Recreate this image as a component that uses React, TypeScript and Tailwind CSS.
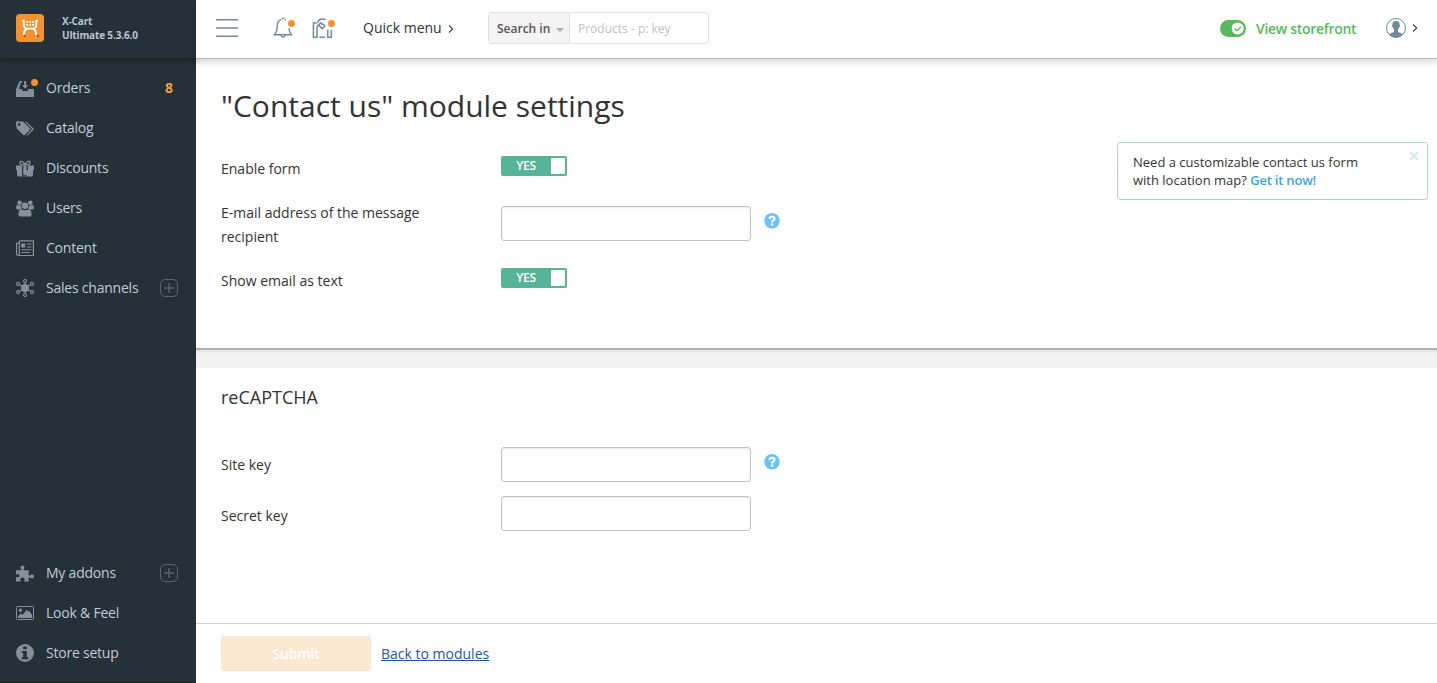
import type { ReactNode } from 'react';

function OrdersIcon() {
  return (
    <svg width="18" height="17" viewBox="0 0 18 17" fill="currentColor">
      <path d="M3.6 1H6.2V2.5H4.8L3 9H6.2V11H11.8V9H18V17H0V9.6Z" />
      <path d="M8.1 1H10.1V5.2H12.2L9.1 8.8L6 5.2H8.1Z" />
    </svg>
  );
}

function CatalogIcon() {
  return (
    <svg width="18" height="15" viewBox="0 0 18 15" fill="currentColor">
      <path fillRule="evenodd" d="M0 1.2Q0 .3 1 .3L6.4 .6Q7.4 .8 8 1.4L14 7.2Q14.7 8 14 8.7L8.8 13.9Q8 14.6 7.2 13.9L1.2 8Q.6 7.3 .4 6.3ZM3.2 2.1A1.3 1.3 0 1 0 3.2 4.7A1.3 1.3 0 1 0 3.2 2.1Z" />
      <path d="M8.5 .6L9.8 .8Q10.6 .9 11.2 1.5L17.4 7.3Q18 8 17.4 8.7L12 14.1Q11.3 14.7 10.5 14.1L15.4 9Q16.2 8 15.3 7.1Z" />
    </svg>
  );
}

function GiftIcon() {
  return (
    <svg width="18" height="17" viewBox="0 0 18 17" fill="currentColor">
      <path d="M0 5.5H6.1V9.9H0ZM11.9 5.5H18V9.9H11.9ZM7.3 6H10.7V15.3H7.3ZM1 9.9H6.2V16.2H10.8V9.9H17V15Q17 16.6 15.4 16.6H2.6Q1 16.6 1 15Z" />
      <path d="M8.5 5C6 5 3.9 4.5 3.9 2.7C3.9 .5 7 .7 9 4.6C11 .7 14.1 .5 14.1 2.7C14.1 4.5 12 5 9.5 5" fill="none" stroke="currentColor" strokeWidth="1.4" />
    </svg>
  );
}

function UsersIcon() {
  return (
    <svg width="18" height="17" viewBox="0 0 18 17" fill="currentColor">
      <circle cx="3.6" cy="2.8" r="2.3" />
      <circle cx="14.4" cy="2.8" r="2.3" />
      <circle cx="9" cy="5.8" r="3.3" />
      <path d="M1.8 4.8Q3.5 6 4.9 5.2Q5 7.4 6 8.5Q4.4 8.7 3.4 9.7H2Q0 9.5 0 7.5Q0 5.3 1.8 4.8ZM16.2 4.8Q14.5 6 13.1 5.2Q13 7.4 12 8.5Q13.6 8.7 14.6 9.7H16Q18 9.5 18 7.5Q18 5.3 16.2 4.8Z" />
      <path d="M5.6 9.2Q9 11.2 12.4 9.2Q15.6 9.7 15.6 14Q15.6 16.6 13 16.6H5Q2.4 16.6 2.4 14Q2.4 9.7 5.6 9.2Z" />
    </svg>
  );
}

function ContentIcon() {
  return (
    <svg width="18" height="17" viewBox="0 0 18 17" fill="none" stroke="currentColor">
      <path d="M3.5 .9H17.4V15.5H2.3Q.6 15.5 .6 13.6V3.3H3.3M3.3 .9V13.4Q3.3 15.5 2 15.5" strokeWidth="1.2" />
      <path d="M5.2 3.5H9.2V7.5H5.2Z" fill="currentColor" stroke="none" />
      <path d="M10.8 4H15.6M10.8 7H15.6M5.2 9.8H15.6M5.2 12.5H14" strokeWidth="1.1" />
    </svg>
  );
}

function ChannelsIcon() {
  return (
    <svg width="18" height="18" viewBox="0 0 18 18" fill="none" stroke="currentColor" strokeWidth="1.1">
      <circle cx="9" cy="9" r="4" fill="currentColor" stroke="none" />
      <path d="M9 3.5V14.5M3.4 5.7L14.6 12.3M14.6 5.7L3.4 12.3" />
      <circle cx="9" cy="2" r="1.5" />
      <circle cx="9" cy="16" r="1.5" />
      <circle cx="2.1" cy="4.9" r="1.5" />
      <circle cx="15.9" cy="4.9" r="1.5" />
      <circle cx="2.1" cy="13.1" r="1.5" />
      <circle cx="15.9" cy="13.1" r="1.5" />
    </svg>
  );
}

function AddonsIcon() {
  return (
    <svg width="18" height="17" viewBox="0 0 18 17" fill="currentColor">
      <path d="M0 5.3H4.9Q5.7 5.2 5.5 4.5Q4.2 3.4 4.5 2Q5 .5 6.5 .5Q8 .5 8.4 2Q8.7 3.4 7.4 4.5Q7.2 5.2 8 5.3H12.7V10.2Q12.8 10.9 13.6 10.6Q14.6 9.2 16.2 9.5Q18 9.9 18 11.5Q18 13.1 16.2 13.4Q14.6 13.6 13.6 12.3Q12.8 12 12.7 12.7V16.6H8.4Q8 16.4 8.2 15.7Q9 14.7 8.5 13.7Q7.8 12.6 6.4 12.6Q5 12.6 4.4 13.7Q3.9 14.7 4.7 15.7Q5 16.4 4.5 16.6H0V12.4Q.2 11.7 1 11.9Q2.3 12.7 3.2 11.7Q4 10.6 3.2 9.6Q2.3 8.7 1 9.4Q.2 9.7 0 9Z" />
    </svg>
  );
}

function LookIcon() {
  return (
    <svg width="18" height="14" viewBox="0 0 18 14" fill="currentColor">
      <rect x=".5" y=".5" width="17" height="13" rx=".8" fill="none" stroke="currentColor" />
      <circle cx="4.4" cy="4.2" r="1.7" />
      <path d="M2 12V10L5.2 7.6L6.8 8.8L10.6 4L12.5 5.5L13.3 5.1L16 9V12Z" />
    </svg>
  );
}

function InfoIcon() {
  return (
    <svg width="18" height="18" viewBox="0 0 18 18" fill="currentColor">
      <path fillRule="evenodd" d="M9 0A9 9 0 1 0 9 18A9 9 0 1 0 9 0ZM7.2 2.4H10.8V5.3H7.2ZM5.8 6.9H10.8V13H12.1V15.2H5.8V13H7.2V9H5.8Z" />
    </svg>
  );
}

function PlusBox() {
  return (
    <svg className="mr-[18px] text-[#5b676e]" width="18" height="18" viewBox="0 0 18 18" fill="none" stroke="currentColor">
      <rect x=".5" y=".5" width="17" height="17" rx="4.5" />
      <path d="M4 9H14M9 4V14" strokeWidth="1.3" />
    </svg>
  );
}

function NavItem({ icon, label, extra, dot }: { icon: ReactNode; label: string; extra?: ReactNode; dot?: boolean }) {
  return (
    <a className="flex h-10 items-center pl-4">
      <span className="relative flex w-[30px] text-[#86909a]">
        {icon}
        {dot && <span className="absolute left-[15px] -top-px size-[7px] rounded-full bg-[#f3922f]" />}
      </span>
      <span className="flex-1 text-sm tracking-[-0.22px] whitespace-nowrap text-[#c0cad8]">{label}</span>
      {extra}
    </a>
  );
}

function Logo() {
  return (
    <svg className="mt-3.5" width="28" height="28" viewBox="0 0 28 28" fill="none">
      <rect width="28" height="28" rx="4" fill="#f39231" />
      <path d="M6 6.6H7.8V11Q8 14.6 11.5 14.7H16.5Q20 14.6 20.2 11V6.6H22" stroke="#fff" strokeWidth="1.8" strokeLinejoin="round" />
      <path d="M11.5 14.8Q7.8 15.6 7.8 21M16.5 14.8Q20.2 15.6 20.2 21" stroke="#fff" strokeWidth="2" />
      <path d="M10.3 7.9H17.9M10.3 10.8H17.9" stroke="#fff" strokeWidth="1.7" strokeDasharray="1.8 1.1" />
      <circle cx="8.7" cy="21.9" r="1.1" fill="#b8472a" />
      <circle cx="22" cy="21.9" r="1.1" fill="#b8472a" />
    </svg>
  );
}

function Bell() {
  return (
    <svg width="22" height="22" viewBox="0 0 22 22" fill="none" stroke="#718a99" strokeWidth="1.4">
      <path d="M8.4 2.6C5.2 3.3 4.3 5.6 4.3 8.5C4.3 13.2 3.4 15.6 1.4 17.8H18.4C17 16 16.2 14.4 16 11.2" />
      <path d="M9.2 2.2Q9.2 1 11.6 1.2M11.8 2.8L13 3.2M7.6 18.4Q10 21.6 12.4 18.4" />
    </svg>
  );
}

function MapMarker() {
  return (
    <svg width="23" height="22" viewBox="0 0 23 22" fill="none" stroke="#718a99" strokeWidth="1.5">
      <path d="M4.8 5H1.4V19.2H5V8.6M7.4 19.2H12.8M15.8 11.4V19.2H19.3V11.8" />
      <path d="M5 8.6L9 4.6M5.4 4.6Q6.8 .9 10.4 .9Q12 .9 13.6 1.6" />
      <path d="M9 4.6Q9.4 6.6 12.6 6.8M6.8 7.4L10.2 10.8L13.4 7.6" />
    </svg>
  );
}

function Avatar() {
  return (
    <svg width="20" height="20" viewBox="0 0 20 20">
      <circle cx="10" cy="10" r="9.5" fill="#fff" stroke="#718a99" />
      <path d="M10 3C12.6 3 13.7 4.5 13.6 6.7Q14.3 7 13.9 8.2Q13.6 9.2 13.1 9.4Q12.8 10.8 12 11.6V13.5Q12.2 14.4 14 14.8Q16.2 15.4 16.6 16.5Q13.8 19.5 10 19.5Q6.2 19.5 3.4 16.5Q3.8 15.4 6 14.8Q7.8 14.4 8 13.5V11.6Q7.2 10.8 6.9 9.4Q6.4 9.2 6.1 8.2Q5.7 7 6.4 6.7C6.3 4.5 7.4 3 10 3Z" fill="#718a99" />
    </svg>
  );
}

function Chevron({ className }: { className: string }) {
  return (
    <svg className={className} width="6" height="8" viewBox="0 0 6 8" fill="none" stroke="#3f3f3f" strokeWidth="1.1">
      <path d="M1 .5L4.7 4L1 7.5" />
    </svg>
  );
}

function Toggle() {
  return (
    <button className="flex h-5 w-[66px] items-stretch rounded-[2px] bg-[#57b597] p-[2px]">
      <span className="w-12 pr-[2px] text-center text-xs leading-4 font-semibold tracking-[-0.3px] text-white">YES</span>
      <span className="w-3.5 rounded-[1px] bg-white" />
    </button>
  );
}

function Help() {
  return (
    <svg className="ml-[13px] mt-[7px]" width="16" height="16" viewBox="0 0 16 16" fill="none">
      <circle cx="8" cy="7.7" r="7.7" fill="#6cc3fa" />
      <path d="M5.5 5.9C5.6 3.2 10.5 3 10.5 5.7C10.5 7.5 8.1 7.3 8.1 9.4" stroke="#fff" strokeWidth="2.2" />
      <path d="M7 10.4H9.3V12.6H7Z" fill="#fff" />
    </svg>
  );
}

function TextInput() {
  return <input className="h-[35px] w-[250px] rounded-[3px] border border-[#c2c2c2] bg-white shadow-[inset_0_1px_2px_rgba(0,0,0,0.09)] outline-none" />;
}

function Sidebar() {
  return (
    <aside className="flex w-[196px] flex-col bg-[#243137]">
      <div className="flex h-[58px] gap-[18px] pl-4 shadow-[0_1px_6px_2px_rgba(0,0,0,0.25)]">
        <Logo />
        <div className="pt-3.5 text-[10px] leading-[14px] font-bold tracking-[-0.15px] text-[#b9c5d3]">
          <div>X-Cart</div>
          <div>Ultimate 5.3.6.0</div>
        </div>
      </div>
      <nav className="flex flex-1 flex-col pt-2.5 pb-[9px]">
        <NavItem dot icon={<OrdersIcon />} label="Orders" extra={<b className="mr-[23px] text-sm text-[#f5a033]">8</b>} />
        <NavItem icon={<CatalogIcon />} label="Catalog" />
        <NavItem icon={<GiftIcon />} label="Discounts" />
        <NavItem icon={<UsersIcon />} label="Users" />
        <NavItem icon={<ContentIcon />} label="Content" />
        <NavItem icon={<ChannelsIcon />} label="Sales channels" extra={<PlusBox />} />
        <div className="flex-1" />
        <NavItem icon={<AddonsIcon />} label="My addons" extra={<PlusBox />} />
        <NavItem icon={<LookIcon />} label="Look & Feel" />
        <NavItem icon={<InfoIcon />} label="Store setup" />
      </nav>
      <div className="h-px bg-[#1a2428]" />
    </aside>
  );
}

function Header() {
  return (
    <header className="flex h-[59px] items-center border-b border-[#bababa] bg-white pb-[2px] pl-5 shadow-[0_3px_7px_rgba(0,0,0,0.16)]">
      <svg width="22" height="18" viewBox="0 0 22 18" stroke="#718a99" strokeWidth="1.6">
        <path d="M0 .8H22M0 9H22M0 17.2H22" />
      </svg>
      <span className="relative ml-[35px] flex">
        <Bell />
        <span className="absolute left-[15px] top-[3px] size-[7px] rounded-full bg-[#f3922f]" />
      </span>
      <span className="relative ml-[17px] flex pt-px">
        <MapMarker />
        <span className="absolute left-4 top-[3px] size-[7px] rounded-full bg-[#f3922f]" />
      </span>
      <span className="ml-[28px] flex w-[125px] items-center text-sm text-[#333]">
        Quick menu
        <Chevron className="ml-[6px] mt-px" />
      </span>
      <div className="flex h-8 w-[221px] overflow-hidden rounded-[3px] border border-[#e2e2e2] text-xs">
        <div className="flex w-[81px] items-center border-r border-[#e2e2e2] bg-[#f4f4f4] pl-2 pt-px font-semibold whitespace-nowrap text-[#555]">
          Search in
          <svg className="mt-[3px] ml-[6px]" width="8" height="4" viewBox="0 0 8 4">
            <path d="M0 0H8L4 4Z" fill="#aaa" />
          </svg>
        </div>
        <div className="flex items-center pt-px pl-2 text-[#c0c0c0]">Products - p: key</div>
      </div>
      <div className="ml-auto flex items-center pr-[19px]">
        <svg width="26" height="17" viewBox="0 0 26 17" fill="none">
          <rect width="26" height="17" rx="8.5" fill="#58b85c" />
          <circle cx="17.7" cy="8.5" r="6" fill="#fff" />
          <path d="M14.6 8.5L17 10.8L21.2 6.6" stroke="#58b85c" strokeWidth="1.3" />
        </svg>
        <span className="mt-px ml-2.5 w-[130px] text-sm font-semibold tracking-[-0.3px] text-[#58b85c]">View storefront</span>
        <Avatar />
        <Chevron className="ml-[6px]" />
      </div>
    </header>
  );
}

export default function App() {
  return (
    <div className="flex h-[683px] overflow-hidden bg-white font-['Open_Sans',sans-serif] text-[#333]">
      <Sidebar />
      <main className="flex flex-1 flex-col">
        <Header />
        <section className="flex h-[291px] justify-between border-b-2 border-[#b0b0b0] pl-[25px]">
          <div>
            <h1 className="mt-[26px] text-[30px] leading-[42px]">"Contact us" module settings</h1>
            <div className="mt-[29px] flex h-[45px] items-start text-sm leading-6">
              <label className="mt-px w-[280px]">Enable form</label>
              <Toggle />
            </div>
            <div className="flex h-[68px] items-start text-sm leading-6">
              <label className="w-[280px] pr-[60px]">E-mail address of the message recipient</label>
              <div className="mt-[5px] flex">
                <TextInput />
                <Help />
              </div>
            </div>
            <div className="flex items-start text-sm leading-6">
              <label className="w-[280px]">Show email as text</label>
              <div className="-mt-px">
                <Toggle />
              </div>
            </div>
          </div>
          <div className="mt-[83px] mr-[9px] flex h-[58px] w-[311px] justify-between rounded-[3px] border border-[#a9d3e8] pt-[10px] pl-[15px] text-[13px] leading-[18px]">
            <p className="whitespace-nowrap">
              Need a customizable contact us form
              <br />
              with location map? <a className="font-semibold tracking-[-0.2px] text-[#3ba5dc]">Get it now!</a>
            </p>
            <svg className="-mt-[2px] mr-[8px]" width="10" height="10" viewBox="0 0 10 10" stroke="#cbe6f6" strokeWidth="1.7">
              <path d="M.8 .8L9.2 9.2M9.2 .8L.8 9.2" />
            </svg>
          </div>
        </section>
        <div className="h-[18px] bg-[#f2f2f2] shadow-[inset_0_2px_2px_rgba(0,0,0,0.06)]" />
        <section className="flex-1 pl-[25px] text-sm">
          <h2 className="mt-[17px] text-lg leading-6">reCAPTCHA</h2>
          <div className="mt-[38px] flex h-[49px] items-start leading-6">
            <label className="mt-[6px] w-[280px]">Site key</label>
            <TextInput />
            <Help />
          </div>
          <div className="flex items-start leading-6">
            <label className="mt-2 w-[280px]">Secret key</label>
            <TextInput />
          </div>
        </section>
        <footer className="flex h-[60px] items-center gap-2.5 border-t border-[#d3d3d3] pl-[25px] text-sm">
          <button className="h-[35px] w-[150px] rounded-[3px] bg-[#fce8d0] font-semibold tracking-[-0.2px] text-white">Submit</button>
          <a className="text-[#1e55a5] underline">Back to modules</a>
        </footer>
      </main>
    </div>
  );
}
